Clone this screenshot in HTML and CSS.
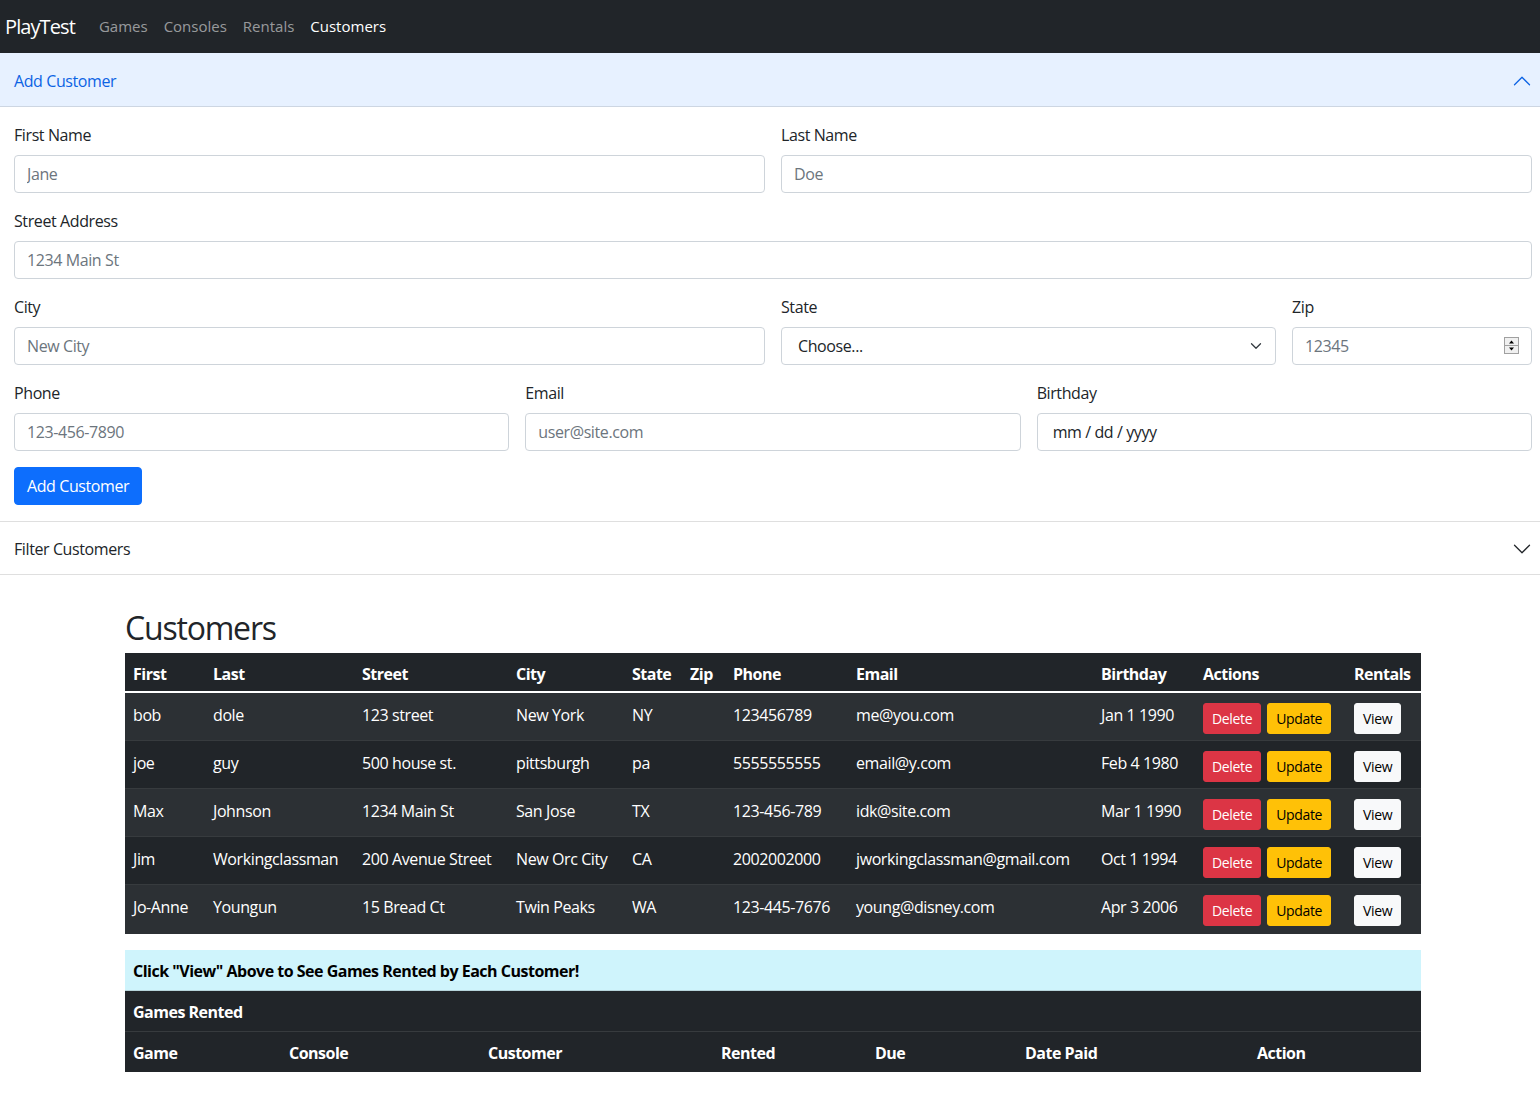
FILE: index.html
```html
<!DOCTYPE html>
<html lang="en">
<head>
<meta charset="utf-8">
<title>PlayTest - Customers</title>
<link rel="stylesheet" href="styles.css">
</head>
<body>
<nav class="navbar">
  <a class="brand" href="#">PlayTest</a>
  <ul class="nav">
    <li><a class="nav-link" href="#">Games</a></li>
    <li><a class="nav-link" href="#">Consoles</a></li>
    <li><a class="nav-link" href="#">Rentals</a></li>
    <li><a class="nav-link active" href="#">Customers</a></li>
  </ul>
</nav>

<div class="accordion">
  <div class="acc-item">
    <div class="acc-header open">
      <span>Add Customer</span>
      <svg class="chev up" viewBox="0 0 16 16" width="20" height="20"><path fill="#0c63e4" fill-rule="evenodd" d="M1.646 4.646a.5.5 0 0 1 .708 0L8 10.293l5.646-5.647a.5.5 0 0 1 .708.708l-6 6a.5.5 0 0 1-.708 0l-6-6a.5.5 0 0 1 0-.708z"/></svg>
    </div>
    <div class="acc-body">
      <form class="form">
        <div class="row">
          <div class="field col-6"><label>First Name</label><input class="control" type="text" placeholder="Jane"></div>
          <div class="field col-6"><label>Last Name</label><input class="control" type="text" placeholder="Doe"></div>
        </div>
        <div class="row">
          <div class="field col-12"><label>Street Address</label><input class="control" type="text" placeholder="1234 Main St"></div>
        </div>
        <div class="row">
          <div class="field col-6"><label>City</label><input class="control" type="text" placeholder="New City"></div>
          <div class="field col-4"><label>State</label>
            <div class="select-wrap">
              <div class="control select">Choose...</div>
              <svg class="select-chev" viewBox="0 0 16 16" width="16" height="12"><path fill="none" stroke="#343a40" stroke-linecap="round" stroke-linejoin="round" stroke-width="1.7" d="M2 5l6 6 6-6"/></svg>
            </div>
          </div>
          <div class="field col-2"><label>Zip</label>
            <div class="select-wrap">
              <input class="control" type="text" placeholder="12345">
              <svg class="spinner" viewBox="0 0 15 17" width="15" height="17"><rect x="0.5" y="0.5" width="14" height="16" fill="#f0f0f0" stroke="#a0a0a0"/><line x1="1" y1="8.5" x2="14" y2="8.5" stroke="#a0a0a0"/><path d="M7.5 3.5l2.5 3h-5z" fill="#000"/><path d="M7.5 13.5l2.5-3h-5z" fill="#000"/></svg>
            </div>
          </div>
        </div>
        <div class="row three">
          <div class="field"><label>Phone</label><input class="control" type="text" placeholder="123-456-7890"></div>
          <div class="field"><label>Email</label><input class="control" type="text" placeholder="user@site.com"></div>
          <div class="field"><label>Birthday</label><div class="control date">mm / dd / yyyy</div></div>
        </div>
        <button type="button" class="btn btn-primary">Add Customer</button>
      </form>
    </div>
  </div>
  <div class="acc-item second">
    <div class="acc-header closed">
      <span>Filter Customers</span>
      <svg class="chev" viewBox="0 0 16 16" width="20" height="20"><path fill="#212529" fill-rule="evenodd" d="M1.646 4.646a.5.5 0 0 1 .708 0L8 10.293l5.646-5.647a.5.5 0 0 1 .708.708l-6 6a.5.5 0 0 1-.708 0l-6-6a.5.5 0 0 1 0-.708z"/></svg>
    </div>
  </div>
</div>

<main class="container">
  <h2 class="title">Customers</h2>
  <table class="table customers">
    <thead>
      <tr>
        <th class="c-first">First</th>
        <th class="c-last">Last</th>
        <th class="c-street">Street</th>
        <th class="c-city">City</th>
        <th class="c-state">State</th>
        <th class="c-zip">Zip</th>
        <th class="c-phone">Phone</th>
        <th class="c-email">Email</th>
        <th class="c-bday">Birthday</th>
        <th class="c-actions">Actions</th>
        <th class="c-rentals">Rentals</th>
      </tr>
    </thead>
    <tbody>
      <tr class="odd">
        <td>bob</td><td>dole</td><td>123 street</td><td>New York</td><td>NY</td><td></td><td>123456789</td><td>me@you.com</td><td>Jan 1 1990</td>
        <td><div class="btns"><button class="btn btn-sm btn-danger">Delete</button><button class="btn btn-sm btn-warning">Update</button></div></td>
        <td><div class="btns"><button class="btn btn-sm btn-light">View</button></div></td>
      </tr>
      <tr>
        <td>joe</td><td>guy</td><td>500 house st.</td><td>pittsburgh</td><td>pa</td><td></td><td>5555555555</td><td>email@y.com</td><td>Feb 4 1980</td>
        <td><div class="btns"><button class="btn btn-sm btn-danger">Delete</button><button class="btn btn-sm btn-warning">Update</button></div></td>
        <td><div class="btns"><button class="btn btn-sm btn-light">View</button></div></td>
      </tr>
      <tr class="odd">
        <td>Max</td><td>Johnson</td><td>1234 Main St</td><td>San Jose</td><td>TX</td><td></td><td>123-456-789</td><td>idk@site.com</td><td>Mar 1 1990</td>
        <td><div class="btns"><button class="btn btn-sm btn-danger">Delete</button><button class="btn btn-sm btn-warning">Update</button></div></td>
        <td><div class="btns"><button class="btn btn-sm btn-light">View</button></div></td>
      </tr>
      <tr>
        <td>Jim</td><td>Workingclassman</td><td>200 Avenue Street</td><td>New Orc City</td><td>CA</td><td></td><td>2002002000</td><td>jworkingclassman@gmail.com</td><td>Oct 1 1994</td>
        <td><div class="btns"><button class="btn btn-sm btn-danger">Delete</button><button class="btn btn-sm btn-warning">Update</button></div></td>
        <td><div class="btns"><button class="btn btn-sm btn-light">View</button></div></td>
      </tr>
      <tr class="odd">
        <td>Jo-Anne</td><td>Youngun</td><td>15 Bread Ct</td><td>Twin Peaks</td><td>WA</td><td></td><td>123-445-7676</td><td>young@disney.com</td><td>Apr 3 2006</td>
        <td><div class="btns"><button class="btn btn-sm btn-danger">Delete</button><button class="btn btn-sm btn-warning">Update</button></div></td>
        <td><div class="btns"><button class="btn btn-sm btn-light">View</button></div></td>
      </tr>
    </tbody>
  </table>

  <table class="table rentals">
    <colgroup>
      <col class="r-game"><col class="r-console"><col class="r-customer"><col class="r-rented"><col class="r-due"><col class="r-paid"><col class="r-action">
    </colgroup>
    <thead>
      <tr class="info"><th colspan="7">Click "View" Above to See Games Rented by Each Customer!</th></tr>
      <tr class="caption-row"><th colspan="7">Games Rented</th></tr>
      <tr>
        <th>Game</th>
        <th>Console</th>
        <th>Customer</th>
        <th>Rented</th>
        <th>Due</th>
        <th>Date Paid</th>
        <th>Action</th>
      </tr>
    </thead>
  </table>
</main>
</body>
</html>
```

FILE: styles.css
```css
* { box-sizing: border-box; }

body {
  margin: 0;
  font-family: "Open Sans", "Noto Sans", sans-serif;
  font-size: 16px;
  line-height: 1.5;
  letter-spacing: -0.4px;
  color: #212529;
  background: #fff;
}

/* Navbar */
.navbar {
  height: 53px;
  background: #212529;
  display: flex;
  align-items: center;
  padding: 0 5px;
}
.brand {
  color: #fff;
  text-decoration: none;
  font-size: 20px;
  letter-spacing: -0.9px;
  margin-right: 16px;
}
.nav {
  list-style: none;
  margin: 0;
  padding: 0;
  display: flex;
}
.nav-link {
  display: block;
  padding: 8px 8px;
  color: rgba(255, 255, 255, 0.55);
  text-decoration: none;
  font-size: 15px;
  letter-spacing: 0;
}
.nav-link.active { color: #fff; }

/* Accordion */
.acc-header {
  display: flex;
  align-items: center;
  justify-content: space-between;
  padding: 0 8px 0 14px;
  font-size: 16px;
}
.acc-header.open {
  height: 54px;
  padding-top: 2px;
  background: #e7f1ff;
  color: #0c63e4;
  border-bottom: 1px solid #cdd6e2;
}
.acc-header.closed {
  height: 53px;
  padding-top: 2px;
  color: #212529;
  border-bottom: 1px solid #dfdfdf;
}
.chev.up { transform: rotate(180deg); }
.acc-item.second { border-top: 1px solid #dfdfdf; }

.acc-body { padding: 16px 8px 16px 14px; }

.row {
  display: flex;
  gap: 16px;
  margin-bottom: 16px;
}
.field { display: flex; flex-direction: column; min-width: 0; }
.col-12 { flex: 1 1 auto; }
.col-6 { flex: 0 0 751px; }
.col-4 { flex: 0 0 495px; }
.col-2 { flex: 0 0 240px; }
.row .col-6:last-child, .row .col-2:last-child { flex: 1 1 auto; }
.row.three .field { flex: 1 1 0; }

label {
  display: block;
  margin-bottom: 8px;
  line-height: 24px;
}
.control {
  display: block;
  width: 100%;
  height: 38px;
  padding: 6px 12px;
  font-family: inherit;
  font-size: 16px;
  line-height: 24px;
  letter-spacing: -0.4px;
  color: #212529;
  background: #fff;
  border: 1px solid #ced4da;
  border-radius: 4px;
  outline: none;
}
.control::placeholder { color: #6c757d; opacity: 1; }
.select { padding-left: 16px; }
.date { padding-left: 15px; }
.select-wrap { position: relative; }
.select-chev {
  position: absolute;
  right: 12px;
  top: 13px;
}
.spinner {
  position: absolute;
  right: 13px;
  top: 10px;
}

.btn {
  display: inline-block;
  font-family: inherit;
  letter-spacing: -0.4px;
  border: 1px solid transparent;
  border-radius: 4px;
  cursor: pointer;
}
.btn-primary {
  background: #0d6efd;
  border-color: #0d6efd;
  color: #fff;
  font-size: 16px;
  line-height: 24px;
  padding: 6px 12px;
}
.btn-sm {
  font-size: 14px;
  line-height: 21px;
  padding: 4px 8px;
  border-radius: 3px;
  letter-spacing: -0.35px;
}
.btn-danger { background: #dc3545; border-color: #dc3545; color: #fff; }
.btn-warning { background: #ffc107; border-color: #ffc107; color: #000; }
.btn-light { background: #f8f9fa; border-color: #f8f9fa; color: #000; }
.btns { display: flex; gap: 6px; align-items: flex-start; }

/* Content */
.container {
  width: 1296px;
  margin: 0 0 0 125px;
  padding-top: 34px;
}
.title {
  font-size: 32px;
  font-weight: 500;
  line-height: 1.2;
  letter-spacing: -1.2px;
  margin: 0 0 6px;
}

.table {
  width: 100%;
  border-collapse: collapse;
  table-layout: fixed;
  color: #fff;
  background: #212529;
  margin-bottom: 16px;
}
.table th, .table td {
  padding: 8px;
  text-align: left;
  vertical-align: top;
  border-bottom: 1px solid #373b3e;
}
.table th { font-weight: 700; letter-spacing: -0.5px; }
.customers thead th { border-bottom: 2px solid #fff; padding-top: 9px; padding-bottom: 5px; }
.customers td { padding-top: 10px; padding-bottom: 6px; }
.customers tr.odd td { background: #2c3034; }
.customers tbody tr:last-child td { padding-bottom: 7px; border-bottom: 1px solid #2c3034; }

.c-first { width: 80px; }
.c-last { width: 149px; }
.c-street { width: 154px; }
.c-city { width: 116px; }
.c-state { width: 58px; }
.c-zip { width: 43px; }
.c-phone { width: 123px; }
.c-email { width: 245px; }
.c-bday { width: 102px; }
.c-actions { width: 151px; }
.c-rentals { width: 75px; }

.rentals th { padding-top: 9px; padding-bottom: 7px; }
.rentals tr.info th {
  background: #cff4fc;
  color: #000;
  border-bottom: 1px solid #b6d4da;
}
.rentals tr:last-child th { border-bottom: 0; }

.r-game { width: 156px; }
.r-console { width: 199px; }
.r-customer { width: 233px; }
.r-rented { width: 154px; }
.r-due { width: 150px; }
.r-paid { width: 232px; }
.r-action { width: 172px; }
```
